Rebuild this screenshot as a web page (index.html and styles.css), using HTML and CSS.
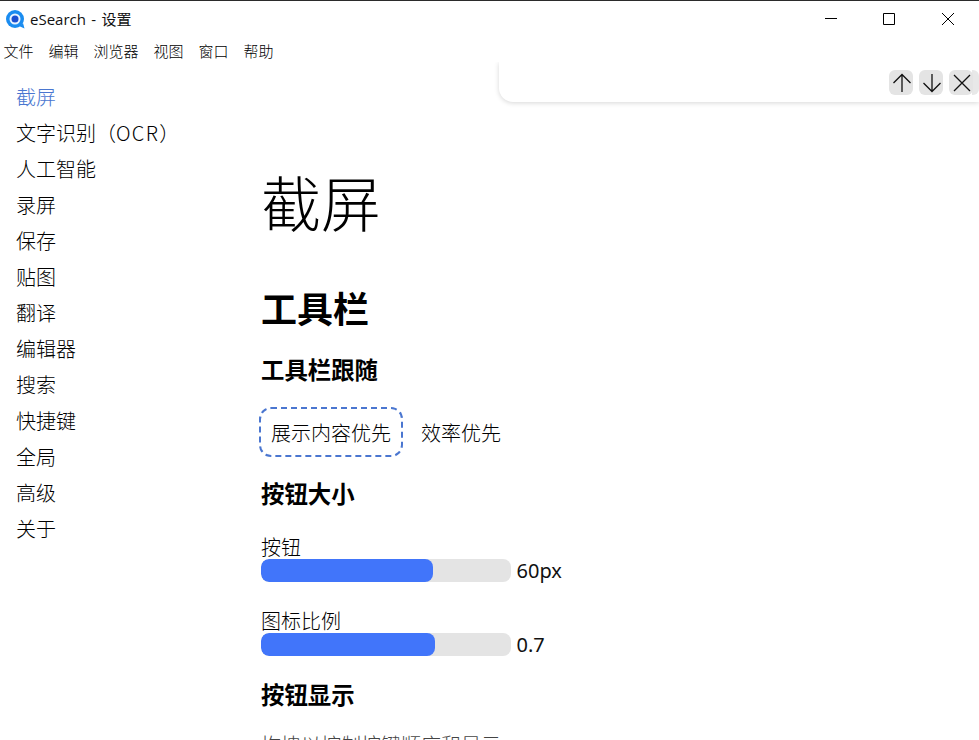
FILE: index.html
```html
<!DOCTYPE html>
<html lang="zh-CN">
<head>
<meta charset="utf-8">
<title>eSearch - 设置</title>
<link rel="stylesheet" href="styles.css">
</head>
<body>
<div class="window">
  <header class="titlebar">
    <svg class="logo" width="20" height="20" viewBox="0 0 20 20"><circle cx="10" cy="10" r="9" fill="#1a8cf0"/><path d="M14 17l5.500 2.500-1.500-5.500z" fill="#1a8cf0"/><circle cx="10" cy="10" r="5.500" fill="#e8f3ff"/><circle cx="10" cy="10" r="3.500" fill="#1c4fd0"/></svg>
    <span class="title">eSearch - 设置</span>
    <div class="controls">
      <span class="ctl"><svg width="12" height="12" viewBox="0 0 12 12"><path d="M0 5.500h12" stroke="#000" fill="none"/></svg></span>
      <span class="ctl"><svg width="12" height="12" viewBox="0 0 12 12"><path d="M.5.5h11v11H.5z" stroke="#000" fill="none"/></svg></span>
      <span class="ctl"><svg width="12" height="12" viewBox="0 0 12 12"><path d="M0 0l12 12M12 0L0 12" stroke="#000" fill="none"/></svg></span>
    </div>
  </header>
  <nav class="menubar">
    <span>文件</span><span>编辑</span><span>浏览器</span><span>视图</span><span>窗口</span><span>帮助</span>
  </nav>
  <div class="body">
    <aside class="sidebar">
      <a class="active">截屏</a>
      <a>文字识别（<span class="latin">OCR</span>）</a>
      <a>人工智能</a>
      <a>录屏</a>
      <a>保存</a>
      <a>贴图</a>
      <a>翻译</a>
      <a>编辑器</a>
      <a>搜索</a>
      <a>快捷键</a>
      <a>全局</a>
      <a>高级</a>
      <a>关于</a>
    </aside>
    <main class="content">
      <h1>截屏</h1>
      <h2>工具栏</h2>
      <h3 class="first">工具栏跟随</h3>
      <div class="radios">
        <span class="radio selected">展示内容优先</span>
        <span class="radio">效率优先</span>
      </div>
      <h3 class="sizes">按钮大小</h3>
      <div class="range-label">按钮</div>
      <div class="range-row">
        <div class="track"><div class="fill" style="width:172px"></div></div>
        <span class="value">60px</span>
      </div>
      <div class="range-label second">图标比例</div>
      <div class="range-row">
        <div class="track"><div class="fill" style="width:174px"></div></div>
        <span class="value">0.7</span>
      </div>
      <h3 class="display">按钮显示</h3>
      <p class="hint">拖拽以控制按键顺序和显示</p>
    </main>
    <div class="findbar">
      <button class="fb"><svg width="20" height="20" viewBox="0 0 20 20"><path d="M10 19V1.500M1.500 10L10 1.500l8.500 8.500" stroke="#111" stroke-width="1.300" fill="none"/></svg></button>
      <button class="fb"><svg width="20" height="20" viewBox="0 0 20 20"><path d="M10 1v17.500M1.500 10l8.500 8.500 8.500-8.500" stroke="#111" stroke-width="1.300" fill="none"/></svg></button>
      <button class="fb"><svg width="20" height="20" viewBox="0 0 20 20"><path d="M2 2l16 16M18 2L2 18" stroke="#111" stroke-width="1.300" fill="none"/></svg></button>
      <span class="fb-sliver"></span>
    </div>
  </div>
</div>
</body>
</html>
```
FILE: styles.css
```css
* { box-sizing: border-box; }
html, body { margin: 0; height: 100%; overflow: hidden; background: #fff; }
body { font-family: "Noto Sans CJK SC", "Noto Sans", sans-serif; color: #000; font-weight: 300; }
.window { height: 740px; display: flex; flex-direction: column; border-top: 1px solid #2b2b2b; overflow: hidden; }
.titlebar { height: 36px; flex: none; display: flex; align-items: center; padding-left: 5px; }
.logo { flex: none; }
.title { margin-left: 5px; padding-bottom: 2px; font-size: 15px; font-weight: 400; word-spacing: 1.500px; color: #111; font-family: "Open Sans", "Noto Sans CJK SC", sans-serif; }
.controls { margin-left: auto; margin-right: 2px; display: flex; }
.ctl { width: 58.5px; height: 30px; display: flex; align-items: center; justify-content: center; }
.menubar { height: 25px; flex: none; display: flex; gap: 15px; align-items: center; padding-left: 3.500px; padding-top: 3px; font-size: 15px; font-weight: 300; color: #000; line-height: 20px; }
.body { flex: 1; min-height: 0; display: flex; position: relative; overflow: hidden; }
.sidebar { width: 261px; flex: none; display: flex; flex-direction: column; padding: 17px 0 0 16px; font-size: 20px; }
.sidebar a { height: 36px; line-height: 36px; color: #000; white-space: nowrap; }
.sidebar a.active { color: #4a76d0; }
.latin { letter-spacing: 1.300px; }
.content { flex: 1; min-width: 0; }
h1 { margin: 0; padding-top: 99px; font-size: 60px; font-weight: 300; line-height: 80px; height: 179px; }
h2 { margin: 0; padding-top: 47px; height: 87px; font-size: 36px; font-weight: 700; line-height: 38px; }
h3 { margin: 0; height: 30px; font-size: 23.4px; font-weight: 700; line-height: 31px; }
h3.first { margin-top: 26px; }
.radios { margin-top: 23px; display: flex; align-items: center; gap: 6px; margin-left: -2px; }
.radio { display: block; padding: 0 10px; height: 50px; line-height: 48px; font-size: 20px; border: 2px dashed transparent; border-radius: 12px; color: #000; white-space: nowrap; }
.radio.selected { border-color: #4a76d0; }
h3.sizes { margin-top: 21px; }
.range-label { margin-top: 25px; height: 26px; font-size: 20px; line-height: 28px; color: #000; }
.range-label.second { margin-top: 25.500px; }
.range-row { display: flex; align-items: center; height: 22.500px; }
.track { width: 250px; height: 22.500px; border-radius: 8px; background: #e4e4e4; overflow: hidden; }
.fill { height: 100%; background: #4175fa; border-radius: 8px; }
.value { margin-left: 5.500px; font-size: 20px; font-weight: 400; font-family: "Noto Sans", sans-serif; color: #111; }
h3.display { margin-top: 23.500px; }
.hint { margin: 23px 0 0; font-size: 20px; line-height: 26px; color: #444; white-space: nowrap; }
.findbar { position: absolute; top: 0; right: 0; width: 480px; height: 40px; background: #fff; border-radius: 0 0 0 14px; box-shadow: 0 1px 5px rgba(0,0,0,.16); display: flex; justify-content: flex-end; align-items: flex-end; gap: 6px; padding: 0 0 7px; }
.fb { width: 24px; height: 25px; padding: 0; border: 0; border-radius: 6px; background: #e4e4e4; display: flex; align-items: center; justify-content: center; position: relative; z-index: 1; }
.fb svg { margin-left: 1px; }
.fb-sliver { width: 7px; height: 25px; margin-left: -7px; background: #e8e8e8; border-radius: 0 6px 6px 0; }
```
